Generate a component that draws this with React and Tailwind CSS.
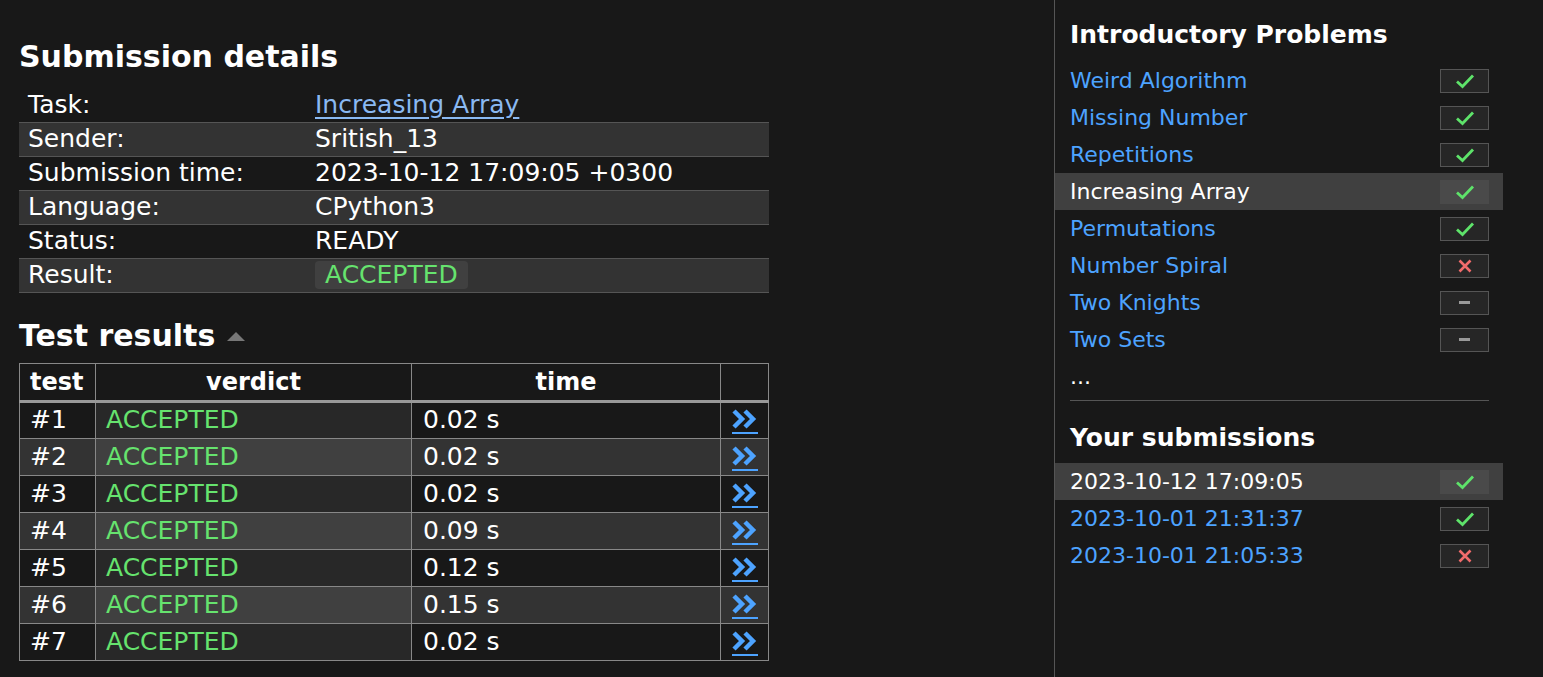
import React from "react";

const details = [
  ["Task:", "task"],
  ["Sender:", "Sritish_13"],
  ["Submission time:", "2023-10-12 17:09:05 +0300"],
  ["Language:", "CPython3"],
  ["Status:", "READY"],
  ["Result:", "result"],
];

const tests = [
  ["#1", "0.02 s"],
  ["#2", "0.02 s"],
  ["#3", "0.02 s"],
  ["#4", "0.09 s"],
  ["#5", "0.12 s"],
  ["#6", "0.15 s"],
  ["#7", "0.02 s"],
];

const problems = [
  ["Weird Algorithm", "ok"],
  ["Missing Number", "ok"],
  ["Repetitions", "ok"],
  ["Increasing Array", "ok", true],
  ["Permutations", "ok"],
  ["Number Spiral", "fail"],
  ["Two Knights", "none"],
  ["Two Sets", "none"],
];

const subs = [
  ["2023-10-12 17:09:05", "ok", true],
  ["2023-10-01 21:31:37", "ok"],
  ["2023-10-01 21:05:33", "fail"],
];

function Badge({ kind, active }) {
  return (
    <span
      className={`flex items-center justify-center w-[49px] h-[24px] ${
        active ? "bg-[#4a4a4a] border border-[#4a4a4a]" : "bg-[#262626] border border-[#555]"
      }`}
    >
      {kind === "ok" && (
        <svg width="22" height="18" viewBox="0 0 22 18">
          <path d="M3 9.5 L8.5 14.5 L19 3.5" fill="none" stroke="#5ee36a" strokeWidth="2.8" />
        </svg>
      )}
      {kind === "fail" && (
        <svg width="18" height="18" viewBox="0 0 18 18">
          <path d="M3.5 3.5 L14.5 14.5 M14.5 3.5 L3.5 14.5" fill="none" stroke="#f26b6b" strokeWidth="2.6" />
        </svg>
      )}
      {kind === "none" && <span className="block w-[11px] h-[3px] bg-[#999]" />}
    </span>
  );
}

function DetailsLink() {
  return (
    <a className="inline-flex flex-col items-center align-middle">
      <svg width="25" height="20" viewBox="0 0 25 20">
        <path d="M2 2 L10 10 L2 18 M13 2 L21 10 L13 18" fill="none" stroke="#4da3ff" strokeWidth="4.5" strokeLinejoin="miter" />
      </svg>
      <span className="block w-[26px] h-[2px] bg-[#4da3ff] mt-[3px]" />
    </a>
  );
}

export default function App() {
  return (
    <div
      className="flex min-h-[677px] bg-[#181818] text-white text-[25px]"
      style={{ fontFamily: '"DejaVu Sans", Verdana, sans-serif' }}
    >
      {/* main content */}
      <div className="w-[1054px] pl-[19px] pt-[38px]">
        <h1 className="text-[30px] font-bold leading-[38px]">Submission details</h1>
        <table className="w-[750px] border-collapse mt-[12px]">
          <tbody>
            {details.map(([k, v], i) => (
              <tr
                key={k}
                className={`h-[34px] ${i > 0 ? "border-t border-[#555]" : ""} ${
                  i === details.length - 1 ? "border-b border-[#555]" : ""
                } ${i % 2 === 1 ? "bg-[#333]" : ""}`}
              >
                <td className="w-[296px] pl-[9px] leading-[32px]">{k}</td>
                <td className="leading-[32px]">
                  {v === "task" ? (
                    <a className="text-[#8ab9f2] underline underline-offset-[4px]">Increasing Array</a>
                  ) : v === "result" ? (
                    <span className="inline-block bg-[#404040] text-[#66e36e] rounded-[4px] px-[10px] leading-[28px]">
                      ACCEPTED
                    </span>
                  ) : (
                    v
                  )}
                </td>
              </tr>
            ))}
          </tbody>
        </table>

        <h2 className="mt-[24px] text-[30px] font-bold leading-[38px] flex items-center">
          Test results
          <svg className="ml-[12px]" width="18" height="10" viewBox="0 0 18 10">
            <path d="M0 10 L9 1 L18 10 Z" fill="#777" />
          </svg>
        </h2>
        <table className="w-[750px] border-collapse mt-[8px]">
          <thead>
            <tr className="h-[34px] border-b-[3px] border-b-[#999] text-[24px]">
              <th className="w-[76px] border border-[#888] text-left pl-[10px] font-bold">test</th>
              <th className="w-[316px] border border-[#888] font-bold">verdict</th>
              <th className="w-[309px] border border-[#888] font-bold">time</th>
              <th className="border border-[#888]"></th>
            </tr>
          </thead>
          <tbody>
            {tests.map(([n, t], i) => (
              <tr key={n} className={`h-[37px] ${i % 2 === 1 ? "bg-[#333]" : ""}`}>
                <td className="border border-[#888] pl-[10px] leading-[30px]">{n}</td>
                <td
                  className={`border border-[#888] pl-[10px] leading-[30px] text-[#66e36e] ${
                    i % 2 === 1 ? "bg-[#404040]" : "bg-[#282828]"
                  }`}
                >
                  ACCEPTED
                </td>
                <td className="border border-[#888] pl-[11px] leading-[30px]">{t}</td>
                <td className="border border-[#888] text-center leading-[0] pt-[3px]">
                  <DetailsLink />
                </td>
              </tr>
            ))}
          </tbody>
        </table>
      </div>

      {/* sidebar */}
      <div className="flex-1 border-l border-[#555] pt-[18px] pr-[40px] text-[22px]">
        <h3 className="pl-[15px] text-[25px] font-bold leading-[34px]">Introductory Problems</h3>
        <ul className="mt-[10px]">
          {problems.map(([name, kind, active]) => (
            <li
              key={name}
              className={`flex items-center justify-between h-[37px] pl-[15px] pr-[14px] ${
                active ? "bg-[#404040]" : ""
              }`}
            >
              <span className={active ? "text-white" : "text-[#4da3ff]"}>{name}</span>
              <Badge kind={kind} active={active} />
            </li>
          ))}
        </ul>
        <div className="pl-[15px] h-[37px] leading-[37px]">...</div>
        <div className="ml-[15px] mr-[14px] mt-[5px] border-t border-[#555]"></div>
        <h3 className="pl-[15px] mt-[20px] text-[25px] font-bold leading-[34px]">Your submissions</h3>
        <ul className="mt-[8px]">
          {subs.map(([d, kind, active]) => (
            <li
              key={d}
              className={`flex items-center justify-between h-[37px] pl-[15px] pr-[14px] ${
                active ? "bg-[#404040]" : ""
              }`}
            >
              <span className={active ? "text-white" : "text-[#4da3ff]"}>{d}</span>
              <Badge kind={kind} active={active} />
            </li>
          ))}
        </ul>
      </div>
    </div>
  );
}
